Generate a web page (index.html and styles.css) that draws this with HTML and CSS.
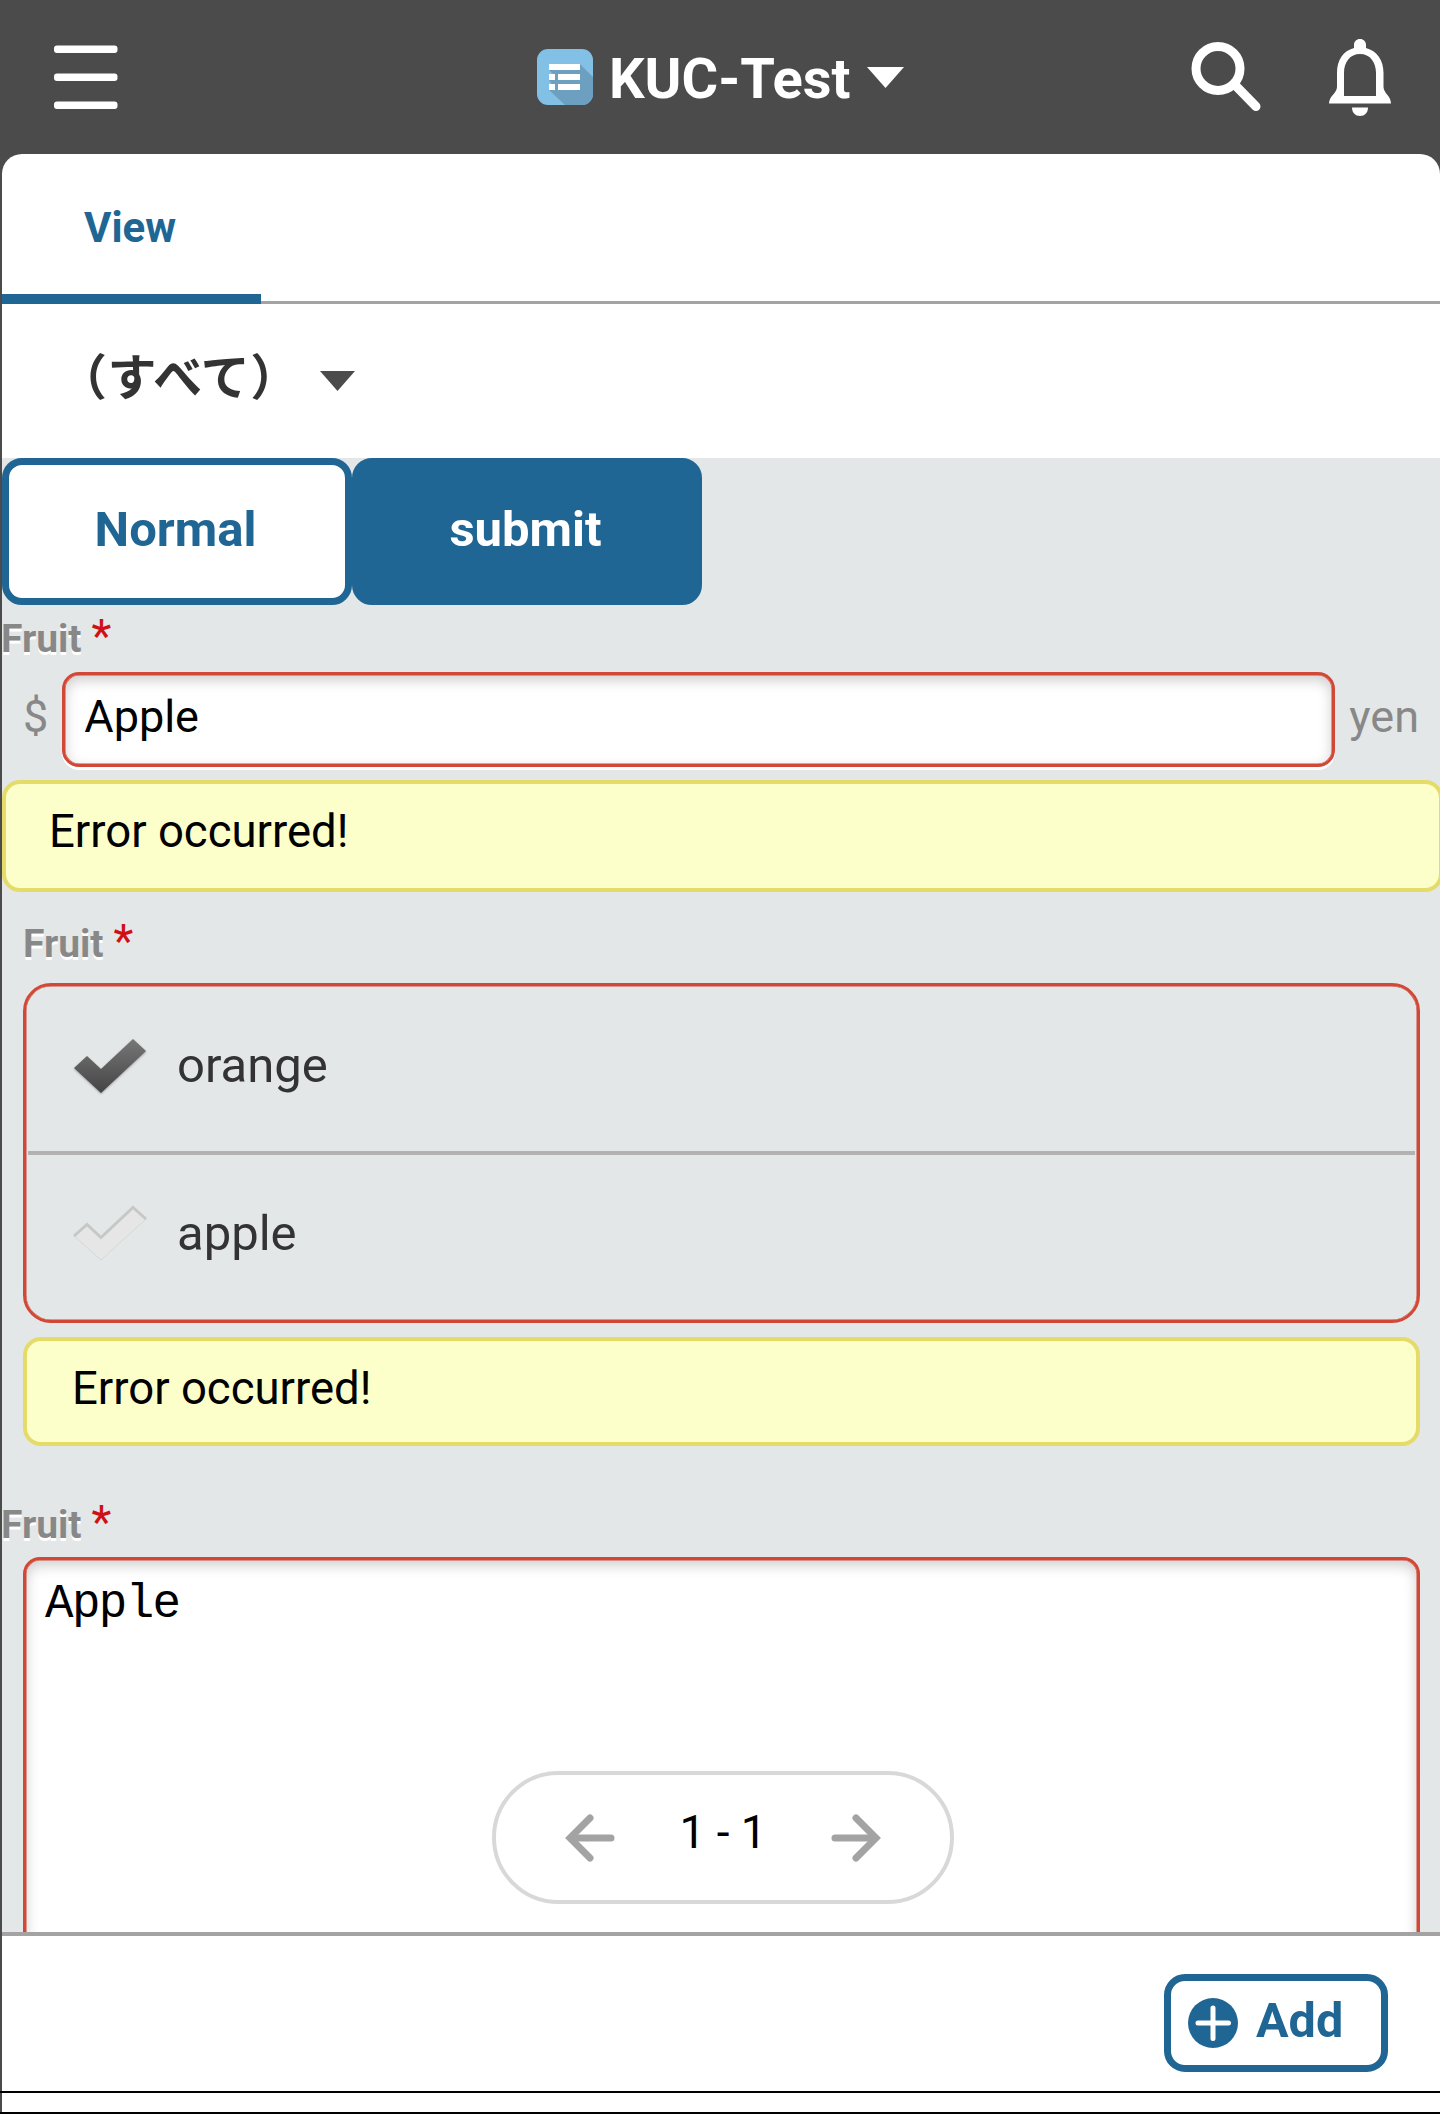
FILE: index.html
```html
<!DOCTYPE html>
<html lang="ja">
<head>
<meta charset="utf-8">
<title>KUC-Test</title>
<link rel="stylesheet" href="styles.css">
</head>
<body>
<div class="app">
  <header class="header">
    <svg class="menu-icon" viewBox="0 0 64 64"><rect y="0.5" width="63.5" height="7.5" rx="3"/><rect y="28.5" width="63.5" height="7.5" rx="3"/><rect y="56.5" width="63.5" height="7.5" rx="3"/></svg>
    <div class="title">
      <svg class="app-icon" viewBox="0 0 56 56">
        <defs><clipPath id="tile"><rect width="56" height="56" rx="11"/></clipPath></defs>
        <g clip-path="url(#tile)">
          <rect width="56" height="56" fill="#82c0e6"/>
          <path d="M43 15L56 28V56H28L12 41L17 38L12 31L17 26L12 21Z" fill="#6d9fc1"/>
          <path d="M12 15H43V21H12ZM12 25H18V31H12ZM21 25H43V31H21ZM12 35H18V41H12ZM21 35H43V41H21Z" fill="#fff"/>
        </g>
      </svg>
      <span class="title-text">KUC-Test</span>
      <svg class="title-caret" viewBox="0 0 37 21"><path d="M0 0H37L18.5 21Z"/></svg>
    </div>
    <svg class="search-icon" viewBox="0 0 70 70"><circle cx="27" cy="26.5" r="22"/><path class="handle" d="M45 44L65 64.500"/></svg>
    <svg class="bell-icon" viewBox="0 0 62 77"><path class="bell-fill" fill-rule="evenodd" d="M31 0C34.500 0 37 2.500 37 6V9C48 12 54.500 21 54.500 34V48C54.500 54 62 57 62 64.500H0C0 57 8 54 8 48V34C8 21 14 12 25 9V6C25 2.500 27.500 0 31 0ZM31 15C21 15 15 23 15 34V57H47V34C47 23 41 15 31 15Z"/><path class="bell-fill" d="M23 68.500H39C39 74 35.500 77 31 77S23 74 23 68.500Z"/></svg>
  </header>

  <main class="panel">
    <nav class="tabs"><div class="tab">View</div></nav>
    <div class="filter">
      <span class="filter-name">（すべて）</span>
      <svg class="filter-caret" viewBox="0 0 35 20"><path d="M0 0H35L17.5 20Z"/></svg>
    </div>

    <section class="content">
      <div class="buttons">
        <button class="button">Normal</button>
        <button class="button submit">submit</button>
      </div>

      <div class="label">Fruit<span class="required">*</span></div>
      <div class="text-row">
        <span class="affix">$</span>
        <div class="input">Apple</div>
        <span class="affix">yen</span>
      </div>
      <div class="error wide-error">Error occurred!</div>

      <div class="group">
        <div class="label group-label">Fruit<span class="required">*</span></div>
        <div class="options">
          <div class="option">
            <svg class="check" viewBox="0 0 74 60">
              <defs><linearGradient id="dark" x1="0" y1="0" x2="0" y2="1"><stop offset="0" stop-color="#777"/><stop offset="1" stop-color="#444"/></linearGradient></defs>
              <path class="check-on" d="M1 31L14 19L28 32L60 2L73 14L28 56Z" fill="url(#dark)"/>
            </svg>
            <span>orange</span>
          </div>
          <div class="option">
            <svg class="check" viewBox="0 0 74 60">
              <path d="M1 31L14 19L28 32L60 2L73 14L28 55Z" fill="#e6e6e6" stroke="#d6d8d8"/>
              <path d="M1 31L14 19.500L28 32.500L60 2.500L73 14" fill="none" stroke="#c6c8c8" stroke-width="3"/>
            </svg>
            <span>apple</span>
          </div>
        </div>
        <div class="error group-error">Error occurred!</div>
      </div>

      <div class="label area-label">Fruit<span class="required">*</span></div>
      <div class="textarea">Apple</div>
    </section>

    <div class="pager">
      <svg class="arrow" viewBox="0 0 50 48"><path class="shaft" d="M6 24H46"/><path class="head" d="M25 4L5 24L25 44"/></svg>
      <span class="range">1 - 1</span>
      <svg class="arrow" viewBox="0 0 50 48"><path class="shaft" d="M4 24H44"/><path class="head" d="M25 4L45 24L25 44"/></svg>
    </div>
  </main>

  <footer class="footer">
    <button class="add">
      <svg class="plus" viewBox="0 0 50 50"><circle cx="25" cy="25" r="25"/><path d="M10 25H40.500M25 10V40.500"/></svg>
      <span>Add</span>
    </button>
  </footer>
</div>
<div class="strip"></div>
</body>
</html>
```
FILE: styles.css
```css
* { box-sizing: border-box; }

body {
  margin: 0;
  width: 1440px;
  height: 2114px;
  overflow: hidden;
  font-family: Roboto, "Noto Sans CJK JP", sans-serif;
  background: #fff;
}

button { font-family: inherit; margin: 0; }
svg { display: block; flex: none; overflow: visible; }

.app {
  display: flex;
  flex-direction: column;
  height: 2091px;
  padding-left: 2px;
  background: #4b4b4b;
}

.header {
  display: flex;
  align-items: center;
  flex: none;
  height: 154px;
  padding: 0 49px 0 52px;
  fill: #fff;
}
.menu-icon { width: 64px; height: 64px; }
.title {
  display: flex;
  align-items: center;
  width: 654px;
  margin-left: 419px;
}
.app-icon { width: 56px; height: 56px; }
.title-text {
  width: 255px;
  margin-left: 16px;
  padding-top: 4px;
  font-size: 56px;
  font-weight: 700;
  line-height: 66px;
  color: #fff;
  white-space: nowrap;
}
.title-caret { width: 37px; height: 21px; margin-left: 3px; }
.search-icon { width: 70px; height: 70px; fill: none; stroke: #fff; stroke-width: 9; }
.handle { stroke-linecap: round; }
.bell-icon { width: 62px; height: 77px; margin-left: 68px; }

.panel {
  position: relative;
  flex: none;
  height: 1778px;
  background: #fff;
  border-radius: 20px 20px 0 0;
}

.tabs {
  display: flex;
  height: 150px;
  border-radius: 20px 20px 0 0;
  box-shadow: inset 0 -3px #a3a3a3;
}
.tab {
  width: 259px;
  height: 150px;
  padding: 4px 0 0 82px;
  border-bottom: 10px solid #206694;
  color: #206694;
  font-size: 42px;
  font-weight: 700;
  line-height: 140px;
}

.filter {
  display: flex;
  align-items: center;
  height: 154px;
  padding: 0 0 6px 56px;
  font-size: 49px;
  font-weight: 700;
  letter-spacing: .4px;
  color: #333;
}
.filter-name { padding-bottom: 9px; }
.filter-caret { width: 35px; height: 20px; margin: 6px 0 0 20px; fill: #4b4b4b; }

.content {
  height: 1474px;
  overflow: hidden;
  background: #e3e7e8;
}

.buttons { display: flex; height: 148px; }
.button {
  width: 350px;
  height: 147px;
  padding: 0 3px 5px 0;
  border: 7px solid #206694;
  border-radius: 20px;
  background: #fff;
  color: #206694;
  font-size: 49px;
  font-weight: 700;
}
.button.submit { background: #206694; color: #fff; }

.label {
  display: flex;
  align-items: baseline;
  gap: 10px;
  height: 66px;
  margin-left: -1px;
  font-size: 39px;
  font-weight: 700;
  line-height: 60px;
  color: #888;
  text-shadow: 0 3px 0 #fff;
}
.required { font-size: 46px; font-weight: 400; color: #d01015; text-shadow: none; }

.text-row {
  display: flex;
  align-items: center;
  justify-content: space-between;
  height: 95px;
  padding: 0 21px;
  font-size: 45px;
}
.affix { padding-bottom: 7px; color: #888; }
.input {
  width: 1273px;
  height: 95px;
  padding-left: 19px;
  border: 3px solid #d14836;
  border-radius: 17px;
  background: #fff;
  box-shadow: 0 3px 0 #fff, inset 0 0 0 .5px #d14836, inset 0 5px 14px rgba(0, 0, 0, .2);
  line-height: 84px;
  color: #000;
}

.error {
  height: 112px;
  margin-top: 13px;
  padding-left: 43px;
  border: 4px solid #e5db68;
  border-radius: 18px;
  background: #fcffc9;
  color: #000;
  font-size: 45.500px;
  line-height: 96px;
}
/* Runs slightly past the right edge of the panel. */
.wide-error { margin-right: -3px; }

.group { padding: 0 20px 0 21px; }
.group-label { height: 91px; padding-top: 19px; margin-left: 0; }
.options {
  height: 340px;
  border: 3px solid #d14836;
  border-radius: 28px;
  box-shadow: inset 0 0 0 .5px #d14836;
}
.option {
  display: flex;
  align-items: center;
  gap: 30px;
  height: 165px;
  padding: 0 0 7px 47px;
  font-size: 49px;
  color: #333;
}
.option + .option { height: 169px; margin: 0 2px; padding: 0 0 9px 45px; border-top: 4px solid #b2b2b2; }
.check { width: 74px; height: 60px; margin-top: 4px; }
.check-on { filter: drop-shadow(0 1px 1px rgba(0, 0, 0, .3)); }
.group-error { height: 109px; margin-top: 14px; padding-left: 45px; }

.area-label { height: 111px; padding-top: 46px; }
.textarea {
  height: 500px;
  margin: 0 20px 0 21px;
  padding: 14px 19px;
  border: 3px solid #d14836;
  border-radius: 17px;
  background: #fff;
  box-shadow: inset 0 0 0 .5px #d14836, inset 0 5px 14px rgba(0, 0, 0, .2);
  color: #000;
  font: 47.500px/60px "Liberation Mono", monospace;
  letter-spacing: -1.600px;
}

.pager {
  position: absolute;
  left: 490px;
  bottom: 28px;
  display: flex;
  align-items: center;
  justify-content: space-between;
  width: 462px;
  height: 133px;
  padding: 0 69px;
  border: 4px solid #d8d8d8;
  border-radius: 67px;
  background: #fff;
  color: #000;
  font-size: 46px;
}
.range { padding-bottom: 11px; }
.arrow { width: 50px; height: 48px; fill: none; stroke: #a3a3a3; stroke-width: 7; stroke-linecap: round; }

.footer {
  display: flex;
  justify-content: flex-end;
  align-items: flex-start;
  height: 159px;
  padding: 38px 52px 0 0;
  border-top: 4px solid #a3a3a3;
  background: #fff;
}
.add {
  display: flex;
  align-items: center;
  gap: 18px;
  width: 224px;
  height: 98px;
  padding: 0 0 0 17px;
  border: 7px solid #206694;
  border-radius: 21px;
  background: #fff;
  color: #206694;
  font-size: 48.500px;
  font-weight: 700;
}
.add span { padding-bottom: 6px; }
.plus { width: 50px; height: 50px; fill: #206694; stroke-linecap: round; }
.plus path { stroke: #fff; stroke-width: 5; }

.strip {
  height: 23px;
  border-top: 2px solid #000;
  border-bottom: 2px solid #000;
  background: linear-gradient(to right, #4b4b4b 2px, #fff 2px);
}
```
